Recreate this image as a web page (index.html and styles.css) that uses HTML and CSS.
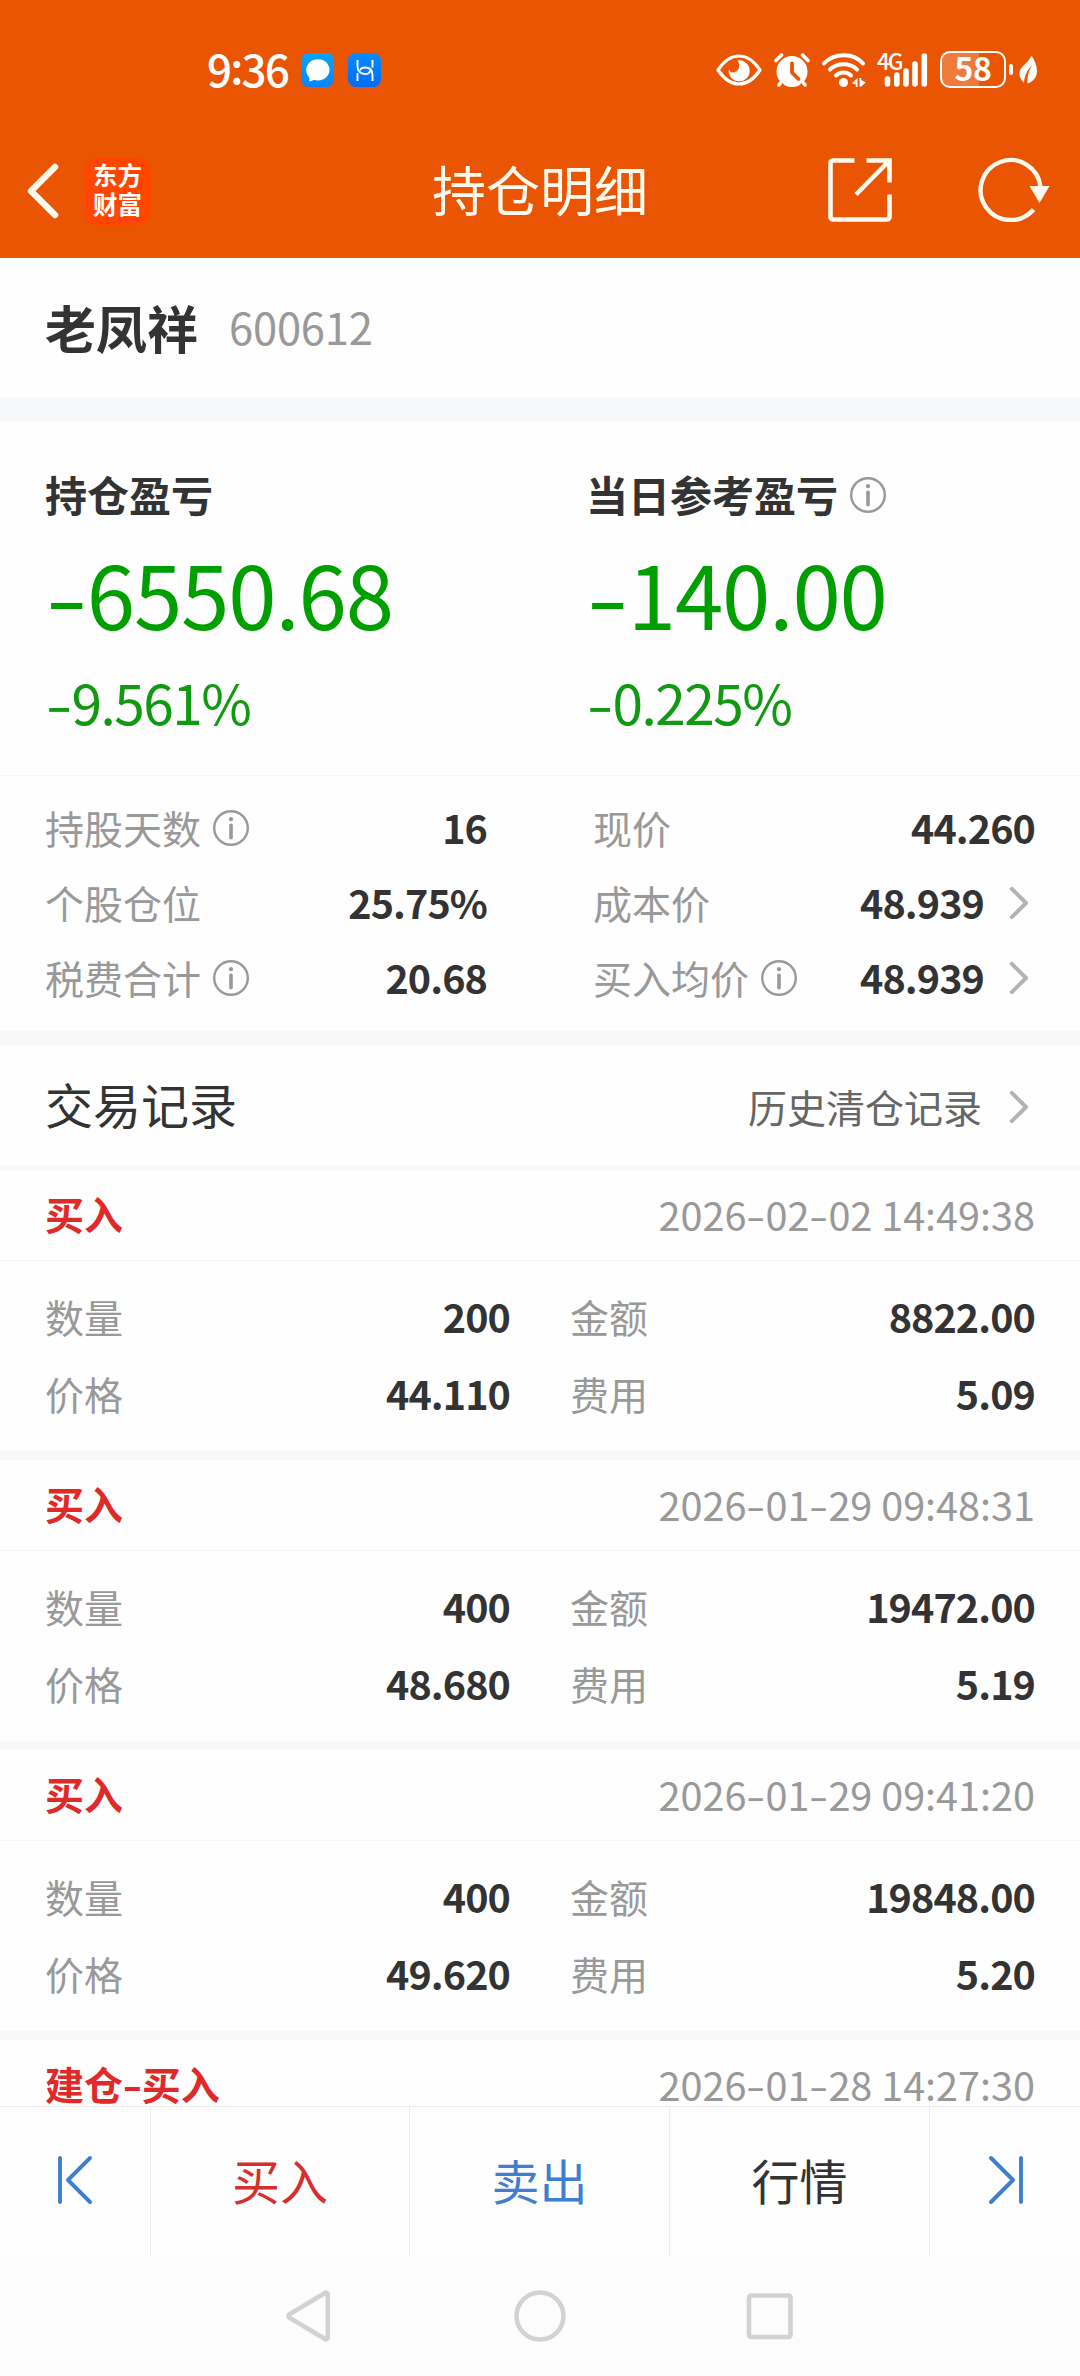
FILE: index.html
```html
<!DOCTYPE html>
<html lang="zh-CN">
<head>
<meta charset="utf-8">
<title>持仓明细</title>
<link rel="stylesheet" href="styles.css">
</head>
<body>
<svg class="defs" aria-hidden="true">
  <symbol id="info" viewBox="0 0 36 36"><circle cx="18" cy="18" r="16.8" fill="none" stroke="currentColor" stroke-width="2.4"/><circle cx="18" cy="9.2" r="2.1" fill="currentColor"/><path d="M18 15.3v12.4" stroke="currentColor" stroke-width="3.6" stroke-linecap="round"/></symbol>
  <symbol id="chevron" viewBox="0 0 20 34"><path d="M2.8 2.8 17 17 2.8 31.2" fill="none" stroke="currentColor" stroke-width="4" stroke-linecap="round" stroke-linejoin="round"/></symbol>
</svg>
<div class="screen">
  <header class="header">
    <div class="status">
      <div class="status-left">
        <span class="clock">9<span class="colon">:</span>36</span>
        <svg class="app-badge" viewBox="0 0 33 34"><defs><linearGradient id="g1" x1="0" y1="0" x2="0" y2="1"><stop offset="0" stop-color="#08a4ff"/><stop offset="1" stop-color="#0685ff"/></linearGradient></defs><rect width="33" height="34" rx="7.5" fill="url(#g1)"/><path d="M17 6.200c6.600 0 11.500 4.600 11.500 10.600S23.600 27.500 17 27.500c-1.600 0-3-.3-4.300-.8-1.400 1-3 1.500-4.700 1.500.5-1.300.6-2.600.2-3.900C6.300 22.500 5.200 19.900 5.200 17 5.200 10.800 10.400 6.200 17 6.200z" fill="#fff"/></svg>
        <svg class="app-badge second" viewBox="0 0 33 34"><defs><linearGradient id="g2" x1="0" y1="0" x2="0" y2="1"><stop offset="0" stop-color="#068cff"/><stop offset="1" stop-color="#006cf8"/></linearGradient></defs><rect width="33" height="34" rx="7.500" fill="url(#g2)"/><path d="M9.500 7v6c0 5 3 8 7.500 8 3 0 5-1.300 5-3.500M24.500 28v-6c0-5-3-7.500-7.500-7.500-3 0-5 1-4.500 3M24.500 7v7.500M9.500 28v-8" fill="none" stroke="#fff" stroke-width="1.900"/></svg>
      </div>
      <div class="status-right">
        <svg class="eye" viewBox="0 0 46 32" width="46" height="32"><path d="M2 16C8 7 15 2 23 2s15 5 21 14c-6 9-13 14-21 14S8 25 2 16z" fill="none" stroke="#fff" stroke-width="3.200" stroke-linejoin="round"/><path d="M21.500 6.500a10.500 10.500 0 1 1-8.500 8c0 2.800 2 4.300 4.300 4 3-.4 5.700-3 5.900-6.500.1-2.300-.4-4-1.700-5.500z" fill="#fff"/></svg>
        <svg class="alarm" viewBox="0 0 36 34" width="36" height="34"><circle cx="18" cy="18.500" r="15.500" fill="#fff"/><path d="M2 7.500 7.500 2M34 7.500 28.500 2M7 29l-2 3M29 29l2 3" stroke="#ea5504" stroke-width="7"/><path d="M2 7.500 7.500 2M34 7.500 28.500 2M8 28l-3 4M28 28l3 4" stroke="#fff" stroke-width="3.600" stroke-linecap="round"/><path d="M18 10.500v9l6.500 6.500" fill="none" stroke="#ea5504" stroke-width="3.800" stroke-linecap="round"/></svg>
        <svg class="wifi" viewBox="0 0 46 34" width="46" height="34"><g fill="none" stroke="#fff" stroke-width="4" stroke-linecap="round"><path d="M3 10.500C13-.5 33-.5 42 10.500"/><path d="M9 16.500c7-7 20-7 27 0"/><path d="M15 22.500c4-4 11-4 15 0"/></g><circle cx="22.500" cy="29.500" r="4.500" fill="#fff"/><path d="M36.500 25v9h-1.700v-2.500l-4-1.300zM38.500 25h1.700v2l4.600 2.500-4.600 4h-1.700z" fill="#fff"/></svg>
        <div class="signal">
          <span class="gen">4G</span>
          <svg viewBox="0 0 44 34" width="44" height="34"><path d="M3.500 26v5M12.800 22v9M22 18v13M31 11v20M40.300 3v28" stroke="#fff" stroke-width="5.600" stroke-linecap="round"/></svg>
        </div>
        <div class="battery"><span>58</span></div>
        <i class="battery-tip"></i>
        <svg class="leaf" viewBox="0 0 18 30" width="18" height="30"><path d="M12.500.5C16 6 18 11 18 16c0 6-3.500 10.500-9.500 12.500C8 22 9.500 16 13 10 8 15 5.500 21 5 27.500 2 25.500.3 22 .5 18 .8 11 9 9 12.500.5z" fill="#fff"/></svg>
      </div>
    </div>
    <div class="navbar">
      <svg class="back" viewBox="0 0 34 56" width="34" height="56"><path d="M29 4 5 28l24 24" fill="none" stroke="#fffaf0" stroke-width="6.500" stroke-linecap="round" stroke-linejoin="round"/></svg>
      <div class="brand">东方<br>财富</div>
      <h1 class="title">持仓明细</h1>
      <svg class="share" viewBox="0 0 64 64" width="64" height="64"><path d="M26.500 2.500H5a2.500 2.500 0 0 0-2.500 2.500v54A2.500 2.500 0 0 0 5 61.500h54a2.500 2.500 0 0 0 2.500-2.500V36.500M38.500 2.500h23v22M61 3 28 36.500" fill="none" stroke="#fffaf0" stroke-width="4.600"/></svg>
      <svg class="refresh" viewBox="0 0 72 66" width="72" height="66"><path d="M55.500 53.500A30 30 0 1 1 62.500 31" fill="none" stroke="#fffaf0" stroke-width="4.400"/><path d="M51.500 30h20l-10 17z" fill="#fffaf0"/></svg>
    </div>
  </header>

  <main class="content">
    <section class="stock"><h2>老凤祥</h2><span class="code">600612</span></section>

    <section class="profit">
      <div class="profit-cell">
        <h3>持仓盈亏</h3>
        <p class="amount"><span class="dash">-</span>6550.68</p>
        <p class="rate"><span class="dash">-</span>9.561%</p>
      </div>
      <div class="profit-cell">
        <h3>当日参考盈亏<svg class="info"><use href="#info"/></svg></h3>
        <p class="amount"><span class="dash">-</span>140.00</p>
        <p class="rate"><span class="dash">-</span>0.225%</p>
      </div>
    </section>

    <section class="stats">
      <div class="stat"><span class="label">持股天数</span><svg class="info"><use href="#info"/></svg><b>16</b></div>
      <div class="stat"><span class="label">现价</span><b>44.260</b></div>
      <div class="stat"><span class="label">个股仓位</span><b>25.75%</b></div>
      <div class="stat"><span class="label">成本价</span><b>48.939</b><svg class="chevron"><use href="#chevron"/></svg></div>
      <div class="stat"><span class="label">税费合计</span><svg class="info"><use href="#info"/></svg><b>20.68</b></div>
      <div class="stat"><span class="label">买入均价</span><svg class="info"><use href="#info"/></svg><b>48.939</b><svg class="chevron"><use href="#chevron"/></svg></div>
    </section>

    <section class="records-head"><h2>交易记录</h2><span class="history">历史清仓记录</span><svg class="chevron"><use href="#chevron"/></svg></section>

    <article class="record">
      <div class="record-head"><b>买入</b><time>2026<span class="dash">-</span>02<span class="dash">-</span>02 14:49:38</time></div>
      <div class="record-body">
        <div class="stat"><span class="label">数量</span><b>200</b></div>
        <div class="stat"><span class="label">金额</span><b>8822.00</b></div>
        <div class="stat"><span class="label">价格</span><b>44.110</b></div>
        <div class="stat"><span class="label">费用</span><b>5.09</b></div>
      </div>
    </article>
    <article class="record">
      <div class="record-head"><b>买入</b><time>2026<span class="dash">-</span>01<span class="dash">-</span>29 09:48:31</time></div>
      <div class="record-body">
        <div class="stat"><span class="label">数量</span><b>400</b></div>
        <div class="stat"><span class="label">金额</span><b>19472.00</b></div>
        <div class="stat"><span class="label">价格</span><b>48.680</b></div>
        <div class="stat"><span class="label">费用</span><b>5.19</b></div>
      </div>
    </article>
    <article class="record">
      <div class="record-head"><b>买入</b><time>2026<span class="dash">-</span>01<span class="dash">-</span>29 09:41:20</time></div>
      <div class="record-body">
        <div class="stat"><span class="label">数量</span><b>400</b></div>
        <div class="stat"><span class="label">金额</span><b>19848.00</b></div>
        <div class="stat"><span class="label">价格</span><b>49.620</b></div>
        <div class="stat"><span class="label">费用</span><b>5.20</b></div>
      </div>
    </article>
    <article class="record">
      <div class="record-head"><b>建仓<span class="dash">-</span>买入</b><time>2026<span class="dash">-</span>01<span class="dash">-</span>28 14:27:30</time></div>
    </article>
  </main>

  <footer class="actions">
    <div class="action blue"><svg viewBox="0 0 36 50" width="36" height="50"><path d="M3 3v44M33 3 11 25l22 22" fill="none" stroke="currentColor" stroke-width="3.900" stroke-linecap="round" stroke-linejoin="round"/></svg></div>
    <div class="action text red">买入</div>
    <div class="action text blue">卖出</div>
    <div class="action text">行情</div>
    <div class="action blue"><svg viewBox="0 0 36 50" width="36" height="50"><path d="M33 3v44M3 3l22 22L3 47" fill="none" stroke="currentColor" stroke-width="3.900" stroke-linecap="round" stroke-linejoin="round"/></svg></div>
  </footer>
  <nav class="system-nav">
    <svg viewBox="0 0 52 52" width="52" height="52"><path d="M41 3 5.500 24.200a2 2 0 0 0 0 3.600L41 49a1.800 1.800 0 0 0 2.800-1.500v-43A1.800 1.800 0 0 0 41 3z"/></svg>
    <svg viewBox="0 0 52 52" width="52" height="52"><circle cx="26" cy="26" r="23.500"/></svg>
    <svg viewBox="0 0 52 52" width="52" height="52"><rect x="5" y="5.500" width="41.500" height="41.500" rx="2"/></svg>
  </nav>
</div>
</body>
</html>
```
FILE: styles.css
```css
* { box-sizing: border-box; margin: 0; padding: 0; }
body { background: #fefefe; color: #333; font-family: "Noto Sans CJK SC", "Noto Sans", sans-serif; }
h1, h2, h3 { font-weight: 400; }
svg { display: block; flex: none; }
.defs { display: none; }
.screen { width: 1080px; height: 2376px; display: flex; flex-direction: column; overflow: hidden; }

.header { height: 258px; flex: none; background: #ea5504; color: #fff; }
.status { height: 124px; padding: 15px 43px 0 207px; display: flex; align-items: center; justify-content: space-between; }
.status-left, .status-right { display: flex; align-items: center; }
.clock { width: 94px; font-size: 44px; font-weight: 500; line-height: 50px; padding-bottom: 4px; letter-spacing: -1.800px; white-space: nowrap; }
.clock .colon { position: relative; top: -3px; }
.app-badge { width: 33px; height: 34px; }
.app-badge.second { margin-left: 14px; }
.alarm { margin-left: 12px; }
.wifi { margin-left: 11px; }
.signal { position: relative; width: 51px; margin-left: 10px; padding-left: 7px; }
.gen { position: absolute; left: 0; top: -3px; font-size: 22.500px; font-weight: 500; line-height: 20px; letter-spacing: -2px; }
.battery { width: 66px; height: 37px; margin-left: 12px; border: 2.500px solid #fff; border-radius: 10px; background: linear-gradient(90deg, rgba(255,255,255,.22) 60%, transparent 60%); font-size: 32px; font-weight: 700; line-height: 29px; text-align: center; letter-spacing: -.5px; }
.battery-tip { width: 4px; height: 11px; margin-left: 3px; border-radius: 2px; background: #fff; }
.leaf { margin-left: 6px; }

.navbar { height: 134px; display: flex; align-items: center; padding: 0 30px 0 26px; }
.brand { width: 67px; height: 67px; margin-left: 24px; padding-top: 2px; border-radius: 13px; background: #ff4600; font-size: 24.500px; font-weight: 700; line-height: 29px; text-align: center; }
.title { margin-left: 281px; font-size: 54px; line-height: 80px; padding-bottom: 4px; color: #fffaf0; }
.share { margin: 0 0 2px 180px; }
.refresh { margin: 0 0 4px auto; }

.content { flex: none; height: 1848px; overflow: hidden; }
.stock { height: 164px; padding: 0 45px 3px; display: flex; align-items: center; border-bottom: 24px solid #f6f8fa; }
.stock h2 { font-size: 51px; font-weight: 700; }
.code { margin-left: 31px; font-size: 43.500px; letter-spacing: -.2px; color: #999; }

.info { width: 36px; height: 36px; margin: 2px 0 0 12px; color: #999; }
.chevron { width: 20px; height: 34px; margin: 2px 6px 0 25px; color: #b3b3b3; }
.dash { display: inline-block; width: .48em; text-align: center; transform: scaleX(1.4); }

.profit { height: 354px; padding: 42px 45px 0; display: grid; grid-template-columns: 541px 1fr; border-bottom: 1px solid #f4f5f7; }
.profit h3 { display: flex; align-items: center; font-size: 42px; font-weight: 700; line-height: 60px; }
.amount { margin-top: 18px; font-size: 87px; line-height: 100px; color: #009f00; letter-spacing: -1.100px; }
.rate { margin-top: 29px; font-size: 55px; line-height: 60px; color: #119911; letter-spacing: -1.500px; }

.stats { height: 270px; padding: 13px 45px 0; display: grid; grid-template-columns: 442px 442px; grid-auto-rows: 75px; justify-content: space-between; border-bottom: 15px solid #f6f8fa; }
.stat { display: flex; align-items: center; }
.stat .label { font-size: 39px; color: #999; }
.stat b { margin-left: auto; font-size: 39.500px; letter-spacing: -.9px; }

.records-head { height: 124px; padding: 0 45px; display: flex; align-items: center; border-bottom: 4px solid #f6f8fa; }
.records-head h2 { font-size: 48px; padding-bottom: 6px; margin-right: auto; }
.history { font-size: 39px; color: #666; }
.history + .chevron { margin-left: 27px; }

.record { border-bottom: 9px solid #f6f8fa; }
.record-head { height: 91px; padding: 0 45px 4px; display: flex; align-items: center; justify-content: space-between; border-bottom: 1px solid #f4f5f7; }
.record-head b { font-size: 39px; color: #e02a2a; }
.record-head time { font-size: 39.600px; color: #999; }
.record-body { height: 190px; padding: 16px 45px 0; display: grid; grid-template-columns: 465px 465px; justify-content: space-between; grid-auto-rows: 77px; }

.actions { height: 150px; flex: none; display: grid; grid-template-columns: 151px 259px 260px 260px 150px; border-top: 1px solid #ececec; }
.action { display: flex; align-items: center; justify-content: center; font-size: 48px; padding-bottom: 3px; border-right: 1px solid #ececec; }
.action.text { padding-bottom: 6px; }
.action:last-child { border-right: 0; padding-left: 2px; }
.red { color: #d62f2f; }
.blue { color: #3f7fcf; }

.system-nav { height: 120px; flex: none; background: #fcfcfc; display: flex; justify-content: center; align-items: center; gap: 178px; }
.system-nav svg { fill: none; stroke: #d2d2d2; stroke-width: 4.600; }
```
